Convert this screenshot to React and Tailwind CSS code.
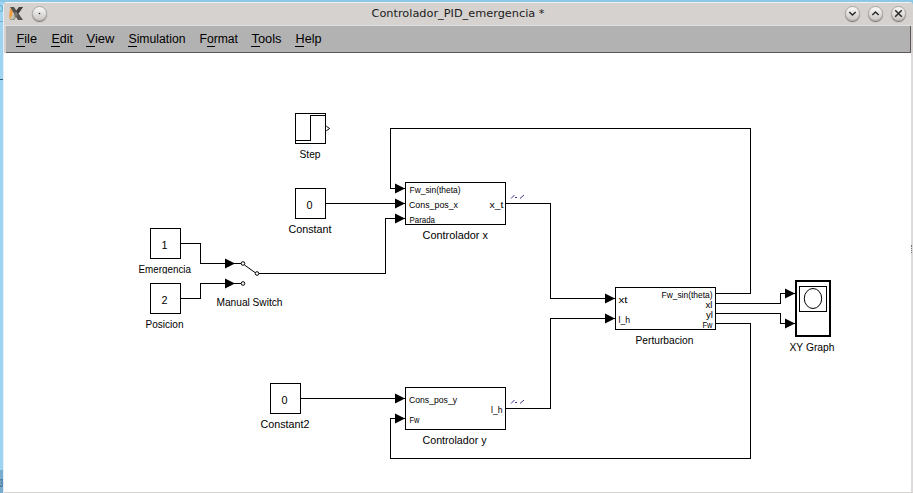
import React from "react";

// ux / uw: underline start and width, relative to the item's left edge
const MENUS = [
  { name: "File", cls: "w-[35px]", len: 20.5, ux: 0, uw: 9 },
  { name: "Edit", cls: "w-[35px]", len: 21.5, ux: 0, uw: 9 },
  { name: "View", cls: "w-[42px]", len: 28, ux: 0, uw: 9 },
  { name: "Simulation", cls: "w-[71px]", len: 57, ux: 0, uw: 9 },
  { name: "Format", cls: "w-[52px]", len: 38.5, ux: 8, uw: 8 },
  { name: "Tools", cls: "w-[44px]", len: 30, ux: 0, uw: 9 },
  { name: "Help", cls: "w-[40px]", len: 26, ux: 0, uw: 9 },
];

const WIRES = [
  "M716 293.5H750.5V128.5H390.5V188.5H405",
  "M326 203.5H405",
  "M259 273.5H385.5V218.5H405",
  "M506 203.5H550.5V298.5H615",
  "M506 408.5H550.5V318.5H615",
  "M716 323.5H750.5V458.5H390.5V418.5H405",
  "M716 303.5H780.5V293.5H795",
  "M716 313.5H780.5V323.5H795",
  "M301 398.5H405",
  "M181 243.5H200.5V263.5H241",
  "M181 298.5H200.5V283.5H241",
];

const ARROWS = [
  [405, 188.5], [405, 203.5], [405, 218.5], [405, 398.5], [405, 418.5],
  [615, 298.5], [615, 318.5], [795, 293.5], [795, 323.5],
  [235, 263.5], [235, 283.5],
];

const BOXES = [
  [295.5, 113.5, 30, 30],
  [295.5, 188.5, 30, 30],
  [150.5, 228.5, 30, 30],
  [150.5, 283.5, 30, 30],
  [270.5, 383.5, 30, 30],
  [405.5, 182.5, 100, 42],
  [405.5, 387.5, 100, 42],
  [615.5, 287.5, 100, 42],
];

// text, left, baseline, width
const LABELS = [
  ["Step", 299.5, 158, 21],
  ["Constant", 288.5, 233, 43],
  ["Emergencia", 138.5, 273, 52.5],
  ["Manual Switch", 216.5, 306, 66],
  ["Posicion", 145.5, 328, 38],
  ["Controlador x", 422.5, 239, 65.5],
  ["Controlador y", 422.5, 444, 64],
  ["Perturbacion", 635.5, 344, 58],
  ["XY Graph", 789.5, 351, 45],
  ["Constant2", 260.5, 428, 49],
  ["0", 306.5, 209, 6],
  ["1", 161.5, 249, 6],
  ["2", 161.5, 304, 6],
  ["0", 281.5, 404, 6],
];

const PORTS = [
  ["Fw_sin(theta)", 409.5, 193, 51],
  ["Cons_pos_x", 409, 208, 49],
  ["Parada", 409.5, 223, 25.5],
  ["x_t", 489.5, 208, 14],
  ["Cons_pos_y", 409, 403, 48],
  ["Fw", 409.5, 423, 10],
  ["l_h", 491, 413, 11.5],
  ["xt", 618.5, 303, 9],
  ["l_h", 618.5, 323, 11.5],
  ["Fw_sin(theta)", 661.5, 298, 51],
  ["xl", 705.5, 308, 7],
  ["yl", 706, 318, 7],
  ["Fw", 702.5, 328, 10],
];

function Texts({ items, className }) {
  return items.map(([text, x, y, w], i) => (
    <text key={i} x={x} y={y} textLength={w} lengthAdjust="spacingAndGlyphs" className={className}>
      {text}
    </text>
  ));
}

function RoundButton({ children }) {
  return (
    <span className="flex h-[15px] w-[15px] items-center justify-center rounded-full border border-[#aaa6a2] bg-linear-to-b from-[#fafafa] to-[#cbc7c4] shadow-[0_1px_1px_#77716c]">
      <svg className="shrink-0" width="13" height="13" viewBox="0 0 13 13" fill="none" stroke="#292929" strokeWidth="1.5">
        {children}
      </svg>
    </span>
  );
}

function TitleBar() {
  return (
    <header className="flex h-6 shrink-0 items-center border-t border-b border-t-[#f3f2f1] border-b-[#e1dfdd] bg-[#d6d2d0] pr-[7px] pb-[2px] pl-[5px]">
      <div className="flex items-center gap-[8px]">
        <svg width="15" height="15" viewBox="0 0 15 15">
          <path d="M1 2L4 5 3 10 0 13Z" fill="#ef9c3d" />
          <path d="M1 1H5L14 14H9Z" fill="#55534e" />
          <path d="M10 1H14L5 14H1Z" fill="#77756e" />
          <path d="M10 1H14L9 8 7 5Z" fill="#3f3e3b" />
          <path d="M1 12L5 8 6 12 3 14Z" fill="#c3bfa8" />
        </svg>
        <RoundButton>
          <circle cx="6.5" cy="6.5" r=".8" fill="#292929" stroke="none" />
        </RoundButton>
      </div>
      <svg className="ml-[322px] h-[20px] w-[180px] shrink-0">
        <text x="2.5" y="14" textLength="173" lengthAdjust="spacing" className="fill-[#1b1b1b] font-['DejaVu_Sans',sans-serif] text-[11.3px]">
          Controlador_PID_emergencia *
        </text>
      </svg>
      <div className="ml-auto flex items-center gap-[8px]">
        <RoundButton><path d="M3.3 5L6.5 8 9.7 5" /></RoundButton>
        <RoundButton><path d="M3.3 8L6.5 5 9.7 8" /></RoundButton>
        <RoundButton><path d="M3.2 3.2L9.8 9.8M9.8 3.2L3.2 9.8" /></RoundButton>
      </div>
    </header>
  );
}

function MenuBar() {
  return (
    <nav className="mr-0.5 ml-0.5 flex h-[27px] shrink-0 border-r border-b border-[#5b5759] bg-[#b2b2b2] pl-[10px]">
      {MENUS.map((m) => (
        <svg key={m.name} className={`h-[26px] shrink-0 ${m.cls}`}>
          <text x="0.5" y="17" textLength={m.len} lengthAdjust="spacingAndGlyphs" className="fill-black font-['Liberation_Sans',sans-serif] text-[12px]">
            {m.name}
          </text>
          <rect x={m.ux} y="20" width={m.uw} height="1" fill="#000" />
        </svg>
      ))}
    </nav>
  );
}

function Diagram() {
  return (
    <svg className="block h-[439px] w-[905px] shrink-0" viewBox="6 53 905 439">
      <g fill="none" stroke="#000" strokeWidth="1" shapeRendering="crispEdges">
        {WIRES.map((d) => <path key={d} d={d} />)}
      </g>
      {ARROWS.map(([x, y]) => (
        <path key={`${x}-${y}`} d={`M${x - 10} ${y - 5}L${x} ${y}L${x - 10} ${y + 5}Z`} fill="#000" />
      ))}
      <Texts items={LABELS} className="fill-black font-['Liberation_Sans',sans-serif] text-[11px]" />
      <g fill="none" stroke="#000" strokeWidth="1" shapeRendering="crispEdges">
        <rect x="150" y="273.5" width="31" height="9" fill="#fff" stroke="none" />
        {BOXES.map(([x, y, w, h]) => (
          <rect key={`${x}-${y}`} x={x} y={y} width={w} height={h} />
        ))}
        <path d="M296 140.5H310.5V115.5H325" />
        <path d="M326.3 126.2L329.6 128.5 326.3 130.8" shapeRendering="geometricPrecision" />
        <rect x="796" y="281" width="34" height="55" strokeWidth="2" />
        <rect x="799.5" y="286.5" width="27" height="25" />
      </g>
      <g fill="#fff" stroke="#000">
        <ellipse cx="813" cy="298.5" rx="8.7" ry="10" />
        <path d="M244.5 265L255 272.5" />
        <circle cx="243" cy="263.5" r="1.8" />
        <circle cx="243" cy="283.5" r="1.8" />
        <circle cx="257" cy="273.5" r="1.8" />
      </g>
      <g fill="none" stroke="#38388c">
        <path d="M511 198.5L514.5 195M515 197.5H517M520 198.5L524 195" />
        <path d="M511 403.5L514.5 400M515 402.5H517M520 403.5L524 400" />
      </g>
      <Texts items={PORTS} className="fill-black font-['Liberation_Sans',sans-serif] text-[9.5px]" />
    </svg>
  );
}

export default function App() {
  return (
    <div className="flex h-[493px] w-[913px] overflow-hidden bg-[#8bc8e6] pt-0.5">
      <aside className="flex w-[3px] shrink-0 flex-col bg-[#9fd3f2]">
        <div className="mt-[3px] h-[7px] w-[3px] rounded-r-full border border-l-0 border-[#5db1cf]" />
        <div className="mt-[9px] h-px bg-[#5db1cf]" />
        <div className="mt-[57px] h-px bg-[#345a78]" />
        <div className="mt-auto h-[23px] bg-[#78add0] pt-[6px]">
          <svg className="block" width="3" height="14">
            <text x="0" y="11" textLength="3" lengthAdjust="spacingAndGlyphs" className="fill-[#315573] font-['Liberation_Sans',sans-serif] text-[11px]">3</text>
          </svg>
        </div>
      </aside>
      <main className="flex w-[910px] shrink-0 flex-col overflow-hidden rounded-t-[4px] border-l border-[#e5eef2] bg-[#d6d2d0]">
        <TitleBar />
        <MenuBar />
        <section className="flex h-[439px] shrink-0 bg-white pl-0.5">
          <Diagram />
          <div className="flex w-0.5 shrink-0 flex-col justify-center bg-[#dcdada]">
            <div className="mb-12 h-2 border-l border-dotted border-[#777]" />
          </div>
        </section>
      </main>
    </div>
  );
}
